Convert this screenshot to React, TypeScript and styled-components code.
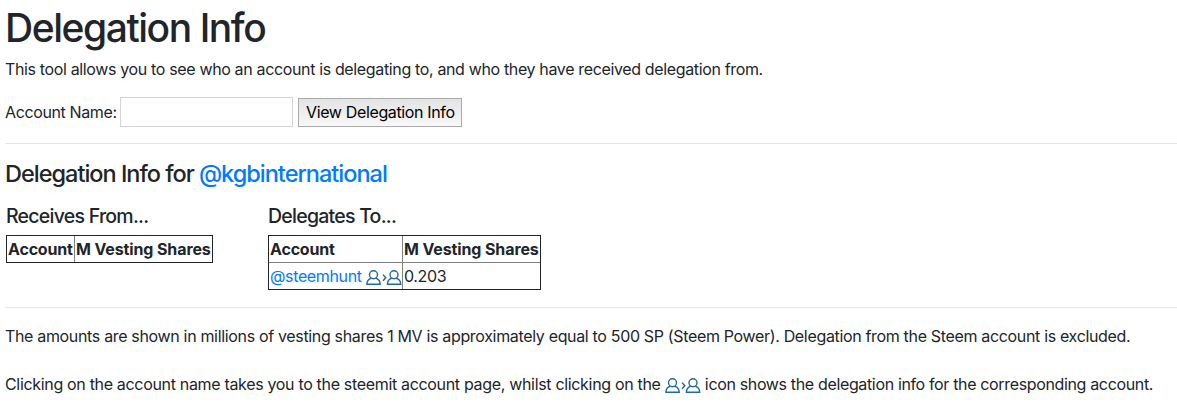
import React from "react";
import styled, { createGlobalStyle } from "styled-components";

const GlobalStyle = createGlobalStyle`
  *, *::before, *::after { box-sizing: border-box; }
  body {
    margin: 0;
    background: #fff;
    color: #212529;
    font-family: Inter, "Liberation Sans", sans-serif;
    font-size: 16px;
    line-height: 24px;
    overflow: hidden;
  }
`;

const Page = styled.main`
  padding: 4px 0 0 5px;
  white-space: nowrap;
`;

const Run = styled.span<{ $track?: number }>`
  letter-spacing: ${(p) => p.$track ?? 0}px;
`;

const Title = styled.h1`
  margin: 0 0 5px;
  font-size: 39px;
  line-height: 48px;
  font-weight: 500;
`;

const Paragraph = styled.p`
  margin: 0;
`;

const Form = styled.form`
  display: flex;
  align-items: center;
  height: 30px;
  margin-top: 16px;
`;

const Label = styled.label`
  width: 115px;
`;

const NameInput = styled.input`
  width: 173px;
  height: 30px;
  margin: 0;
  border: 1px solid #d3d3d3;
  background: #fff;
  font: inherit;
`;

const SubmitButton = styled.button`
  display: flex;
  align-items: center;
  width: 164px;
  height: 29px;
  margin: 1px 0 0 5px;
  padding: 0 7px 1px;
  border: 1px solid #a9abab;
  border-radius: 0;
  background: linear-gradient(#e3e3e3, #f8f8f8);
  color: #000;
  font: inherit;
`;

const Rule = styled.hr`
  height: 1px;
  margin: 16px 0;
  border: 0;
  background: #e5e5e5;
`;

const Subtitle = styled.h3`
  margin: 0 0 16px;
  font-size: 23.5px;
  line-height: 28px;
  font-weight: 500;
`;

const Link = styled.a`
  color: #007bff;
  text-decoration: none;
`;

const Columns = styled.div`
  display: flex;
  align-items: flex-start;
  padding: 0 0 1px 1px;
`;

const Column = styled.section<{ $width: number }>`
  width: ${(p) => p.$width}px;
`;

const ColumnTitle = styled.h4`
  margin: 0 0 7px;
  font-size: 19.5px;
  line-height: 24px;
  font-weight: 500;
`;

const Table = styled.table<{ $width: number }>`
  width: ${(p) => p.$width}px;
  table-layout: fixed;
  border-collapse: separate;
  border-spacing: 0;
  border: 1px solid #212529;
`;

const Cell = styled.td<{ $width?: number }>`
  width: ${(p) => (p.$width ? `${p.$width}px` : "auto")};
  height: 26px;
  padding: 1px 0 1px 1px;
  text-align: left;
  & + & { border-left: 1px solid #808080; }
  tr + tr > & { height: 27px; border-top: 1px solid #808080; }
`;

const UsersSvg = styled.svg`
  display: inline-block;
  width: 36px;
  height: 16px;
  vertical-align: -4px;
`;

function UsersIcon() {
  return (
    <UsersSvg viewBox="0 0 36 16" fill="none" stroke="#24699c" strokeWidth="1.4">
      <circle cx="7.5" cy="4.7" r="4" />
      <path d="M5.3 8.1C2.3 9.2 .9 11.4.9 14.3h13.3c0-2.9-1.4-5.1-4.5-6.2" />
      <path d="M17 4.6l2.8 3.1-2.8 3.1" stroke="#3b5c70" />
      <circle cx="28" cy="4.7" r="4" />
      <path d="M25.8 8.1c-3 1.1-4.4 3.3-4.4 6.2h13.3c0-2.9-1.4-5.1-4.5-6.2" />
    </UsersSvg>
  );
}

export default function App() {
  return (
    <>
      <GlobalStyle />
      <Page>
        <Title><Run $track={-1.45}>Delegation Info</Run></Title>
        <Paragraph>
          <Run $track={-0.355}>This tool allows you to see who an account is delegating to, and who they have received delegation from.</Run>
        </Paragraph>
        <Form onSubmit={(e) => e.preventDefault()}>
          <Label htmlFor="account"><Run $track={-0.38}>Account Name:</Run></Label>
          <NameInput id="account" />
          <SubmitButton type="submit"><Run $track={-0.36}>View Delegation Info</Run></SubmitButton>
        </Form>
        <Rule />
        <Subtitle>
          <Run $track={-1}>Delegation Info for <Link>@kgbinternational</Link></Run>
        </Subtitle>
        <Columns>
          <Column $width={262}>
            <ColumnTitle><Run $track={-0.75}>Receives From...</Run></ColumnTitle>
            <Table $width={207}>
              <tbody>
                <tr>
                  <Cell as="th" $width={67}><Run $track={-0.18}>Account</Run></Cell>
                  <Cell as="th"><Run $track={-0.12}>M Vesting Shares</Run></Cell>
                </tr>
              </tbody>
            </Table>
          </Column>
          <Column $width={273}>
            <ColumnTitle><Run $track={-0.75}>Delegates To...</Run></ColumnTitle>
            <Table $width={273}>
              <tbody>
                <tr>
                  <Cell as="th" $width={133}><Run $track={-0.18}>Account</Run></Cell>
                  <Cell as="th"><Run $track={-0.12}>M Vesting Shares</Run></Cell>
                </tr>
                <tr>
                  <Cell><Link><Run $track={-0.36}>@steemhunt </Run></Link><UsersIcon /></Cell>
                  <Cell><Run $track={-0.36}>0.203</Run></Cell>
                </tr>
              </tbody>
            </Table>
          </Column>
        </Columns>
        <Rule />
        <Paragraph>
          <Run $track={-0.335}>The amounts are shown in millions of vesting shares 1 MV is approximately equal to 500 SP (Steem Power). Delegation from the Steem account is excluded.</Run>
        </Paragraph>
        <br />
        <Paragraph>
          <Run $track={-0.325}>Clicking on the account name takes you to the steemit account page, whilst clicking on the </Run>
          <UsersIcon />
          <Run $track={-0.35}> icon shows the delegation info for the corresponding account.</Run>
        </Paragraph>
      </Page>
    </>
  );
}
